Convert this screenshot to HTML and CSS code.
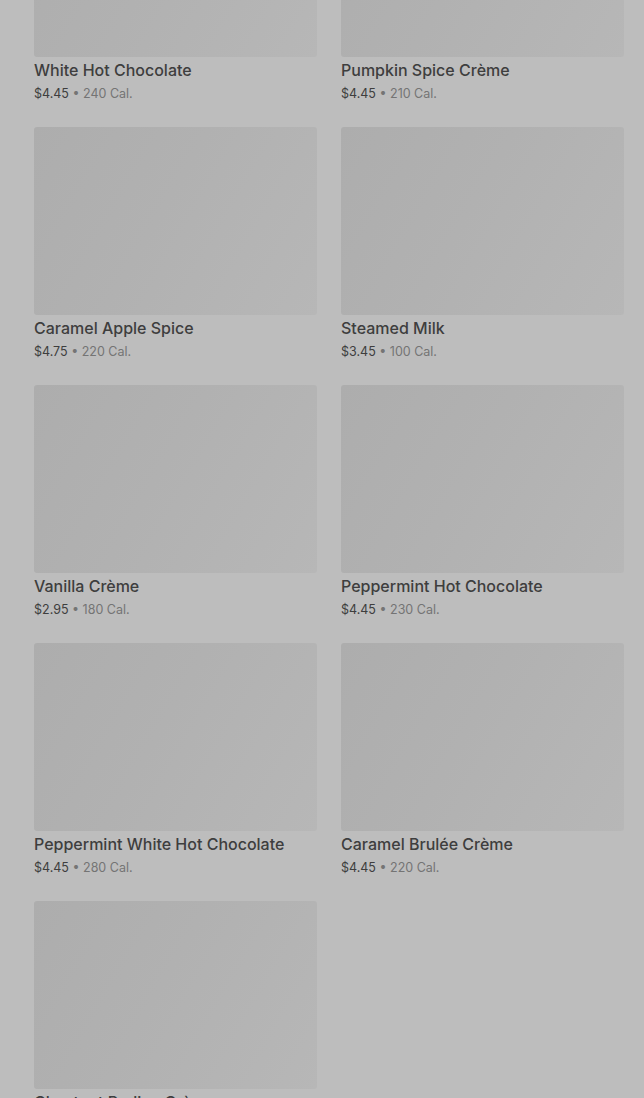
FILE: index.html
```html
<!DOCTYPE html>
<html lang="en">
<head>
  <meta charset="UTF-8">
  <meta name="viewport" content="width=device-width, initial-scale=1.0">
  <title>Hot Drinks</title>
  <link rel="stylesheet" href="styles.css">
</head>
<body>
  <div class="menu-grid">
    <div class="item">
      <div class="thumb"></div>
      <h3 class="name">White Hot Chocolate</h3>
      <p class="info"><span class="price">$4.45</span> • 240 Cal.</p>
    </div>
    <div class="item">
      <div class="thumb"></div>
      <h3 class="name">Pumpkin Spice Crème</h3>
      <p class="info"><span class="price">$4.45</span> • 210 Cal.</p>
    </div>
    <div class="item">
      <div class="thumb"></div>
      <h3 class="name">Caramel Apple Spice</h3>
      <p class="info"><span class="price">$4.75</span> • 220 Cal.</p>
    </div>
    <div class="item">
      <div class="thumb"></div>
      <h3 class="name">Steamed Milk</h3>
      <p class="info"><span class="price">$3.45</span> • 100 Cal.</p>
    </div>
    <div class="item">
      <div class="thumb"></div>
      <h3 class="name">Vanilla Crème</h3>
      <p class="info"><span class="price">$2.95</span> • 180 Cal.</p>
    </div>
    <div class="item">
      <div class="thumb"></div>
      <h3 class="name">Peppermint Hot Chocolate</h3>
      <p class="info"><span class="price">$4.45</span> • 230 Cal.</p>
    </div>
    <div class="item">
      <div class="thumb"></div>
      <h3 class="name">Peppermint White Hot Chocolate</h3>
      <p class="info"><span class="price">$4.45</span> • 280 Cal.</p>
    </div>
    <div class="item">
      <div class="thumb"></div>
      <h3 class="name">Caramel Brulée Crème</h3>
      <p class="info"><span class="price">$4.45</span> • 220 Cal.</p>
    </div>
    <div class="item">
      <div class="thumb"></div>
      <h3 class="name">Chestnut Praline Crème</h3>
      <p class="info"><span class="price">$4.45</span> • 330 Cal.</p>
    </div>
  </div>
</body>
</html>
```

FILE: styles.css
```css
html, body {
  margin: 0;
  padding: 0;
  height: 100%;
  overflow: hidden;
}
body {
  font-family: Inter, "Noto Sans", sans-serif;
  background-color: #bdbdbd;
}
.menu-grid {
  display: grid;
  grid-template-columns: 283px 283px;
  column-gap: 24px;
  row-gap: 24px;
  padding: 0 20px 0 34px;
  margin-top: -131px;
}
.thumb {
  height: 188px;
  border-radius: 3px;
  background: linear-gradient(120deg, #adadad 0%, #b1b1b1 45%, #b7b7b7 100%);
}
.name {
  margin: 2px 0 0;
  font-size: 16px;
  line-height: 22px;
  font-weight: 500;
  color: #3e3e3e;
}
.info {
  margin: 3px 0 0;
  font-size: 12.5px;
  line-height: 19px;
  color: #747474;
}
.price {
  color: #3e3e3e;
}
```
